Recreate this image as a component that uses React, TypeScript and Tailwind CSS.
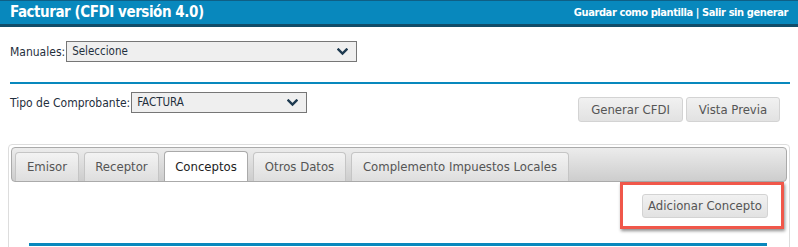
import React from "react";

const Chevron = () => (
  <svg width="11" height="8" viewBox="0 0 11 8" className="shrink-0">
    <path d="M1.5 1.5 L5.5 5.5 L9.5 1.5" fill="none" stroke="#1e3a50" strokeWidth="2.4" strokeLinecap="square" />
  </svg>
);

const Btn = ({ children, className = "" }: { children: React.ReactNode; className?: string }) => (
  <div
    className={
      "flex items-center justify-center rounded-[3px] border border-[#d3d3d3] bg-gradient-to-b from-[#f1f1f1] to-[#e2e2e2] text-[13px] text-[#555] " +
      className
    }
  >
    {children}
  </div>
);

const tabs = [
  { label: "Emisor", w: "w-[64px]" },
  { label: "Receptor", w: "w-[75px]" },
  { label: "Conceptos", w: "w-[84px]", active: true },
  { label: "Otros Datos", w: "w-[93px]" },
  { label: "Complemento Impuestos Locales", w: "w-[218px]" },
];

export default function App() {
  return (
    <div
      className="relative h-[247px] w-[798px] overflow-hidden bg-white text-[#222]"
      style={{ fontFamily: '"DejaVu Sans Condensed", "DejaVu Sans", Tahoma, sans-serif' }}
    >
      {/* Header */}
      <div className="flex h-[27px] items-center justify-between border-t border-b-[3px] border-t-[#0f5f85] border-b-[#124d69] bg-[#0888bd] pl-[10px] pr-[10px] text-white">
        <div className="text-[15px] font-bold leading-none tracking-[-0.45px]">Facturar (CFDI versión 4.0)</div>
        <div className="text-[11px] font-bold leading-none tracking-[-0.4px]">Guardar como plantilla | Salir sin generar</div>
      </div>

      {/* Manuales */}
      <div className="mt-[14px] flex items-center pl-[10px]">
        <span className="text-[12px] text-[#1f2f3d]">Manuales:</span>
        <div className="ml-[1px] flex h-[21px] w-[291px] items-center justify-between border border-[#767676] bg-[#efefef] pl-[5px] pr-[8px] text-[11.5px] text-[#1f2f3d]">
          <span>Seleccione</span>
          <Chevron />
        </div>
      </div>

      {/* Blue separator */}
      <div className="ml-[10px] mr-[8px] mt-[20px] h-[2px] bg-[#0888bd]" />

      {/* Tipo de comprobante + buttons */}
      <div className="mt-[6px] flex items-start justify-between pl-[10px] pr-[18px]">
        <div className="flex items-center pt-[2px]">
          <span className="text-[12px] text-[#1f2f3d]">Tipo de Comprobante:</span>
          <div className="ml-[1px] flex h-[21px] w-[176px] items-center justify-between border border-[#767676] bg-[#efefef] pl-[5px] pr-[8px] text-[11.5px] text-[#1f2f3d]">
            <span>FACTURA</span>
            <Chevron />
          </div>
        </div>
        <div className="mt-[7px] flex gap-[3px]">
          <Btn className="h-[25px] w-[105px]">Generar CFDI</Btn>
          <Btn className="h-[25px] w-[94px]">Vista Previa</Btn>
        </div>
      </div>

      {/* Tab panel */}
      <div className="ml-[8px] mr-[8px] mt-[22px] h-[120px] rounded-t-[4px] border border-[#dddddd] p-[2px]">
        <div className="flex h-[35px] items-end gap-[5px] rounded-[4px] border border-[#aaaaaa] bg-gradient-to-b from-[#ececec] to-[#cdcdcd] px-[3px]">
          {tabs.map((t) => (
            <div
              key={t.label}
              className={
                "flex h-[29px] items-center justify-center rounded-t-[4px] border border-b-0 text-[13px] " +
                t.w +
                (t.active
                  ? " h-[30px] border-[#aaaaaa] bg-white text-[#222]"
                  : " border-[#c5c5c5] bg-gradient-to-b from-[#f3f3f3] to-[#dedede] text-[#555]")
              }
            >
              {t.label}
            </div>
          ))}
        </div>
        <div className="flex justify-end pr-[3px]">
          <div className="flex h-[47px] w-[164px] items-center justify-end border-[3px] border-[#f0574a] pr-[13px] shadow-[1px_2px_3px_rgba(0,0,0,0.45)]">
            <Btn className="h-[24px] w-[126px]">Adicionar Concepto</Btn>
          </div>
        </div>
        <div className="ml-[18px] mr-[20px] mt-[14px] h-[3px] bg-[#0888bd]" />
      </div>
    </div>
  );
}
